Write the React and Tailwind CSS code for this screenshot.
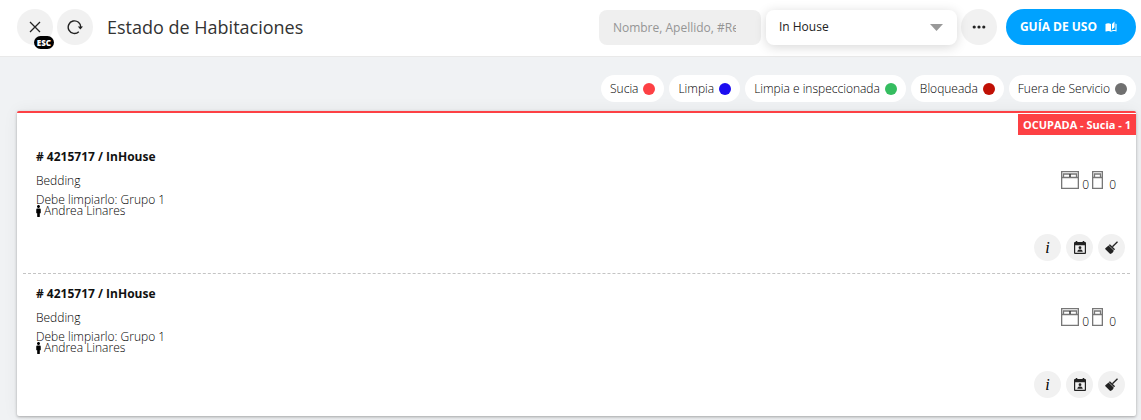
import { FaMale } from "react-icons/fa";
import { MdAutoStories } from "react-icons/md";

const STATES = [
  { label: "Sucia", color: "bg-[#fd4044]" },
  { label: "Limpia", color: "bg-[#1c0df0]" },
  { label: "Limpia e inspeccionada", color: "bg-[#35bd60]" },
  { label: "Bloqueada", color: "bg-[#c01005]" },
  { label: "Fuera de Servicio", color: "bg-[#707070]" },
];

const ROOMS = [
  { id: 1, title: "# 4215717 / InHouse", kind: "Bedding", cleaner: "Grupo 1", guest: "Andrea Linares", double: 0, single: 0 },
  { id: 2, title: "# 4215717 / InHouse", kind: "Bedding", cleaner: "Grupo 1", guest: "Andrea Linares", double: 0, single: 0 },
];

function CloseIcon() {
  return (
    <svg width="12" height="12" viewBox="0 0 12 12" fill="none" stroke="#222" strokeWidth="1.3" aria-hidden="true">
      <path d="M1 1l10 10M11 1L1 11" />
    </svg>
  );
}

function ReloadIcon() {
  return (
    <svg width="16" height="16" viewBox="0 0 16 16" fill="none" aria-hidden="true">
      <path d="M11.800 12.800A6.300 6.300 0 1 1 13.800 8.400" stroke="#222" strokeWidth="1.400" />
      <path d="M10.800 7.500h5.200l-2.600 3z" fill="#222" />
    </svg>
  );
}

function DotsIcon() {
  return (
    <svg width="14" height="4" viewBox="0 0 14 4" fill="#222" aria-hidden="true">
      <circle cx="2.2" cy="2" r="1.600" />
      <circle cx="7" cy="2" r="1.600" />
      <circle cx="11.8" cy="2" r="1.600" />
    </svg>
  );
}

function DoubleBedIcon() {
  return (
    <svg width="18" height="18" viewBox="0 0 18 18" fill="none" stroke="#777" strokeWidth="1.300" aria-hidden="true">
      <path d="M.650.650h16.700v16.700H.650zM.650 6.500h16.700M2.500 6V3h13v3" />
      <path d="M9 3v3" stroke="#333" strokeWidth="1.500" />
    </svg>
  );
}

function SingleBedIcon() {
  return (
    <svg width="11" height="18" viewBox="0 0 11 18" fill="none" stroke="#777" strokeWidth="1.300" aria-hidden="true">
      <path d="M.650.650h9.700v16.700H.650zM.650 6.500h9.700M2.500 6V3h6v3" />
    </svg>
  );
}

function CalendarPersonIcon() {
  return (
    <svg width="12" height="13" viewBox="0 0 12 13" fill="#222" aria-hidden="true">
      <path fillRule="evenodd" d="M1.700 0h1.600v1h5.400V0h1.600v1H11a1 1 0 0 1 1 1v10a1 1 0 0 1-1 1H1a1 1 0 0 1-1-1V2a1 1 0 0 1 1-1h.7zM1.200 4.300v7.500h9.600V4.300z" />
      <circle cx="6" cy="6.700" r="1.400" />
      <path d="M3.300 10.700c0-1.500 1.500-2.100 2.700-2.100s2.700.6 2.700 2.100z" />
    </svg>
  );
}

function BroomIcon() {
  return (
    <svg width="13" height="13" viewBox="0 0 13 13" aria-hidden="true">
      <path d="M7.400 5.800L12.500.8" stroke="#222" strokeWidth="1.300" fill="none" />
      <path d="M5.200 3.600l4.400 4.200.2 1.100-.9.200-4.800-4.600.1-.9z" fill="#222" />
      <path d="M3.600 4.500l5.100 5c-.2 1.700-1.800 3.200-3.500 3.400L.1 8.100c.1-1.300 1.400-1.900 2-2.400z" fill="#222" />
    </svg>
  );
}

const action = "flex size-[27px] items-center justify-center rounded-full bg-[#f1f1f1]";

function Room({ room }) {
  return (
    <article className="flex h-[137px] justify-between border-b border-dashed border-[#c4c4c4] pr-[5px] pl-[13px] last:border-transparent">
      <div className="pt-3 text-xs font-light">
        <h2 className="leading-4 font-bold text-[#111]">{room.title}</h2>
        <p className="mt-2 leading-4">{room.kind}</p>
        <p className="mt-[5px] leading-3">Debe limpiarlo: {room.cleaner}</p>
        <p className="flex h-[10px] items-center gap-[3px] leading-2">
          <FaMale className="h-3 w-[5px] text-black" aria-hidden="true" />
          {room.guest}
        </p>
      </div>
      <div className="flex flex-col items-end justify-between pt-[34px] pb-3">
        <div className="flex items-start gap-[3px] pr-[9px] text-xs font-light">
          <DoubleBedIcon />
          <span className="pt-[6px] leading-4">{room.double}</span>
          <SingleBedIcon />
          <span className="pt-[6px] pl-[3px] leading-4">{room.single}</span>
        </div>
        <div className="flex gap-[5px]">
          <button type="button" aria-label="Información" className={action + " font-['Liberation_Serif',serif] text-base leading-4 italic"}>i</button>
          <button type="button" aria-label="Reserva" className={action}><CalendarPersonIcon /></button>
          <button type="button" aria-label="Limpieza" className={action}><BroomIcon /></button>
        </div>
      </div>
    </article>
  );
}

export default function App() {
  return (
    <div className="min-h-screen bg-[#f0f2f4] font-['Open_Sans',sans-serif] text-black">
      <header className="flex h-[57px] items-center border-b border-[#e9e9e9] bg-white pr-[5px] pb-[2px] pl-[17px]">
        <div className="flex gap-1">
          <button type="button" aria-label="Cerrar" className="relative flex size-9 items-center justify-center rounded-full bg-[#f1f1f1]">
            <CloseIcon />
            <span className="absolute -right-px -bottom-1 rounded-full bg-black px-[3px] text-[8px] leading-[13px] font-extrabold text-white">ESC</span>
          </button>
          <button type="button" aria-label="Recargar" className="flex size-9 items-center justify-center rounded-full bg-[#f1f1f1]">
            <ReloadIcon />
          </button>
        </div>
        <h1 className="ml-[14px] flex-1 text-lg font-normal text-[#333]">Estado de Habitaciones</h1>
        <input
          type="text"
          aria-label="Buscar"
          placeholder="Nombre, Apellido, #Reserva"
          className="h-[35px] w-[162px] rounded-lg bg-[#efefef] pr-[25px] pl-[14px] text-xs font-normal placeholder:text-[#959595]"
        />
        <div className="relative ml-[5px] w-[191px]">
          <select aria-label="Estado" className="h-[35px] w-full appearance-none rounded-lg bg-white pr-8 pl-[13px] text-xs font-normal text-[#222] shadow-[0_2px_12px_rgba(0,0,0,0.16)]">
            <option>In House</option>
          </select>
          <svg className="pointer-events-none absolute top-[14px] right-[14px]" width="13" height="7" viewBox="0 0 13 7" fill="#999" aria-hidden="true">
            <path d="M0 0h13L6.500 7z" />
          </svg>
        </div>
        <button type="button" aria-label="Más opciones" className="ml-1 flex size-9 items-center justify-center rounded-full bg-[#f1f1f1]">
          <DotsIcon />
        </button>
        <button type="button" className="ml-[9px] flex h-9 items-center gap-2 rounded-full bg-[#00a2ff] pr-[19px] pl-[14px] text-xs font-bold text-white">
          GUÍA DE USO
          <MdAutoStories className="size-3" aria-hidden="true" />
        </button>
      </header>

      <main className="pt-[18px] pr-[5px] pb-1 pl-[17px]">
        <ul className="flex justify-end gap-[5px]">
          {STATES.map((s) => (
            <li key={s.label} className="flex h-[27px] items-center gap-[5px] rounded-full bg-white px-[9px] text-xs font-light">
              {s.label}
              <span className={"size-3 rounded-full " + s.color} />
            </li>
          ))}
        </ul>

        <section className="mt-[9px] rounded-xs border-t-2 border-[#fd4044] bg-white pb-[5px] shadow-[0_1px_3px_rgba(0,0,0,0.3),0_0_16px_rgba(0,0,0,0.06)]">
          <div className="flex justify-end pt-px">
            <strong className="bg-[#fd4044] px-[5px] text-[11px] leading-[21px] font-bold text-white">OCUPADA - Sucia - 1</strong>
          </div>
          <div className="px-[6px] pt-[2px]">
            {ROOMS.map((r) => <Room key={r.id} room={r} />)}
          </div>
        </section>
      </main>
    </div>
  );
}
